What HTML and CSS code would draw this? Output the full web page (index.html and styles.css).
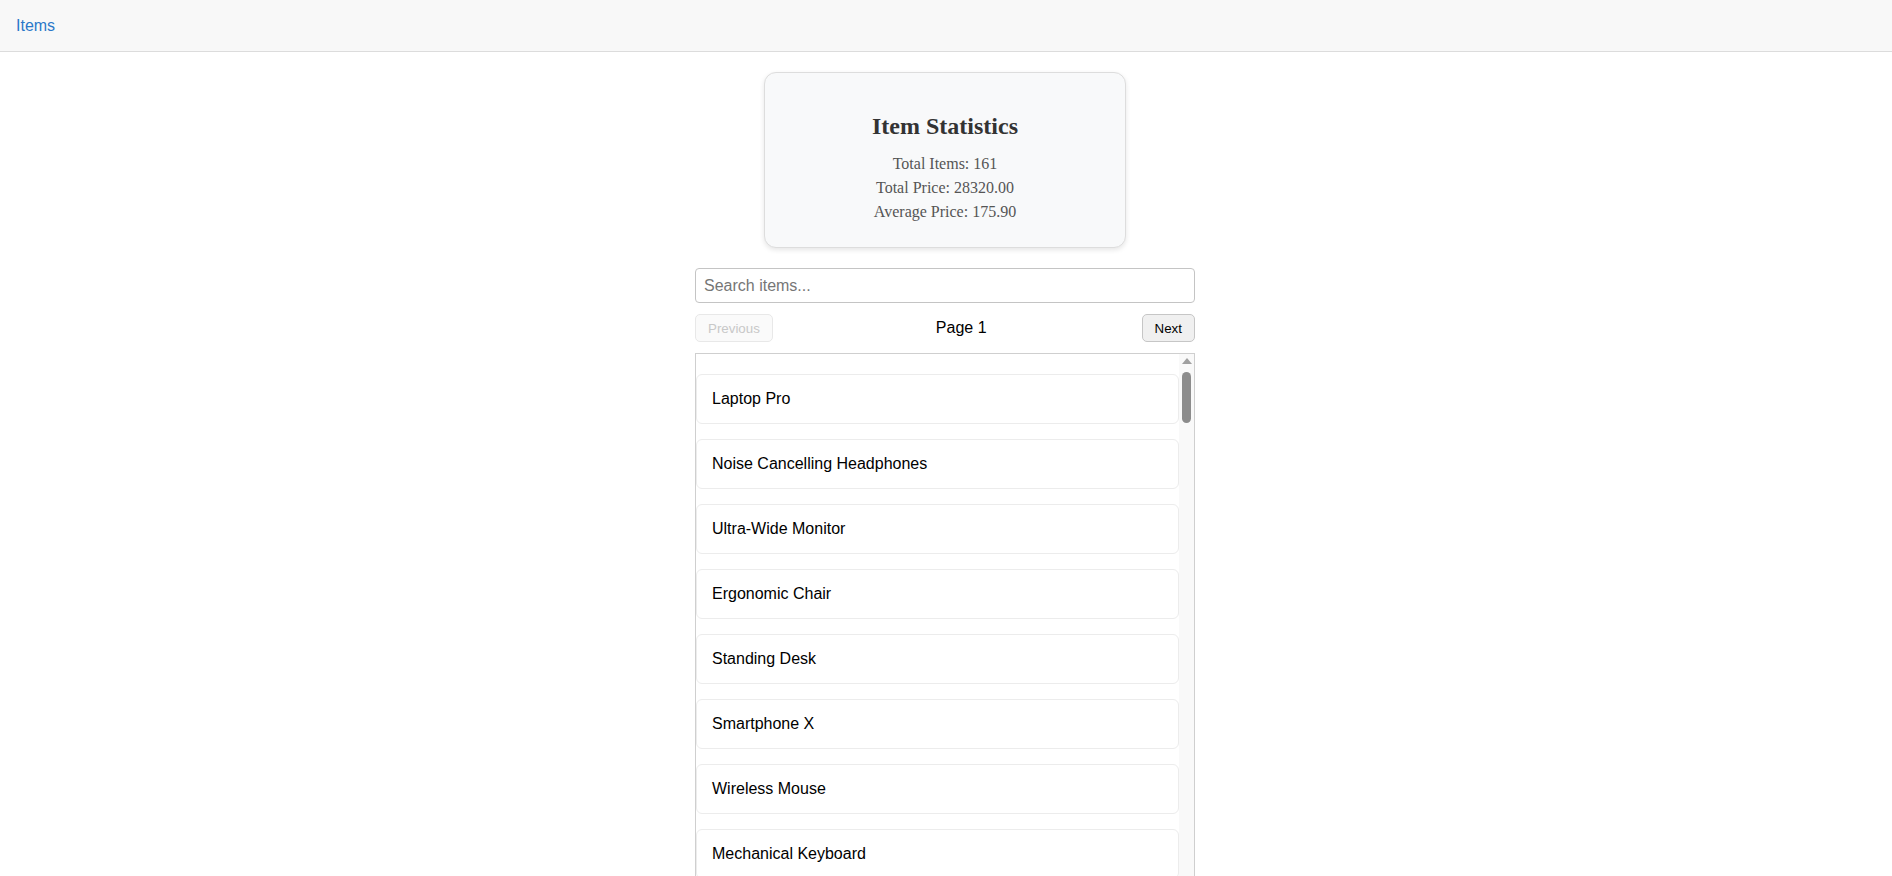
FILE: index.html
```html
<!DOCTYPE html>
<html lang="en">
<head>
<meta charset="utf-8">
<title>Items</title>
<link rel="stylesheet" href="styles.css">
</head>
<body>
<nav class="topbar">
  <a class="topbar-link" href="#">Items</a>
</nav>
<main class="page">
  <section class="stats-card">
    <h2 class="stats-title">Item Statistics</h2>
    <p class="stats-line">Total Items: 161</p>
    <p class="stats-line">Total Price: 28320.00</p>
    <p class="stats-line">Average Price: 175.90</p>
  </section>
  <div class="items-panel">
    <input class="search" type="text" placeholder="Search items...">
    <div class="pager">
      <button class="pager-btn" disabled>Previous</button>
      <span class="pager-label">Page 1</span>
      <button class="pager-btn">Next</button>
    </div>
    <div class="item-list">
      <div class="item-viewport">
        <div class="item-row">Laptop Pro</div>
        <div class="item-row">Noise Cancelling Headphones</div>
        <div class="item-row">Ultra-Wide Monitor</div>
        <div class="item-row">Ergonomic Chair</div>
        <div class="item-row">Standing Desk</div>
        <div class="item-row">Smartphone X</div>
        <div class="item-row">Wireless Mouse</div>
        <div class="item-row">Mechanical Keyboard</div>
        <div class="item-row">USB-C Hub</div>
        <div class="item-row">External SSD</div>
      </div>
      <div class="scrollbar">
        <span class="scroll-arrow"></span>
        <span class="scroll-thumb"></span>
      </div>
    </div>
  </div>
</main>
</body>
</html>
```
FILE: styles.css
```css
html, body {
  margin: 0;
  padding: 0;
  overflow: hidden;
  background: #fff;
}

body {
  font-family: "Liberation Sans", Arial, sans-serif;
  color: #000;
}

.topbar {
  background: #f8f8f8;
  border-bottom: 1px solid #dcdcdc;
  padding: 16px 16px;
  line-height: 19px;
  font-size: 16px;
}

.topbar-link {
  color: #2b78c9;
  text-decoration: none;
}

.page {
  display: flex;
  flex-direction: column;
  align-items: center;
  padding-right: 2px;
}

.stats-card {
  box-sizing: border-box;
  width: 362px;
  margin-top: 20px;
  padding: 20px;
  background: #f8f9fa;
  border: 1px solid #dddddd;
  border-radius: 12px;
  box-shadow: 0 2px 5px rgba(0, 0, 0, 0.1);
  text-align: center;
  font-family: "Liberation Serif", "Times New Roman", serif;
}

.stats-title {
  margin: 20px 0 15px;
  font-size: 24px;
  font-weight: bold;
  color: #333;
}

.stats-line {
  margin: 6px 0;
  font-size: 16px;
  line-height: 18px;
  color: #555;
}

.items-panel {
  width: 500px;
  margin-top: 20px;
  display: flex;
  flex-direction: column;
}

.search {
  box-sizing: border-box;
  width: 100%;
  height: 35px;
  padding: 0 8px;
  border: 1px solid #c4c4c4;
  border-radius: 4px;
  font-family: "Liberation Sans", Arial, sans-serif;
  font-size: 16px;
  color: #000;
  outline: none;
}

.search::placeholder {
  color: #767676;
}

.pager {
  display: flex;
  justify-content: space-between;
  align-items: center;
  margin: 11px 0;
}

.pager-btn {
  box-sizing: border-box;
  height: 28px;
  padding: 0 12px;
  font-family: "Liberation Sans", Arial, sans-serif;
  font-size: 13.33px;
  color: #000;
  background: #f0f0f0;
  border: 1px solid #c6c6c6;
  border-radius: 5px;
}

.pager-btn:disabled {
  color: #c8c8c8;
  background: #fafafa;
  border-color: #e8e8e8;
}

.pager-label {
  font-size: 16px;
  padding-left: 8px;
}

.item-list {
  box-sizing: border-box;
  height: 600px;
  border: 1px solid #cfcfcf;
  overflow: hidden;
  display: flex;
}

.item-viewport {
  flex: 1;
  min-width: 0;
  padding-top: 20px;
  display: flex;
  flex-direction: column;
  gap: 15px;
}

.item-row {
  box-sizing: border-box;
  flex: none;
  height: 50px;
  padding: 0 15px;
  display: flex;
  align-items: center;
  border: 1px solid #ececec;
  border-radius: 6px;
  background: #fff;
  font-size: 16px;
  color: #000;
}

.scrollbar {
  flex: none;
  width: 15px;
  background: #f9f9f9;
  display: flex;
  flex-direction: column;
  align-items: center;
}

.scroll-arrow {
  margin-top: 4px;
  width: 0;
  height: 0;
  border-left: 5px solid transparent;
  border-right: 5px solid transparent;
  border-bottom: 6px solid #a0a0a0;
}

.scroll-thumb {
  margin-top: 8px;
  width: 9px;
  height: 51px;
  border-radius: 5px;
  background: #8c8c8c;
}
```
